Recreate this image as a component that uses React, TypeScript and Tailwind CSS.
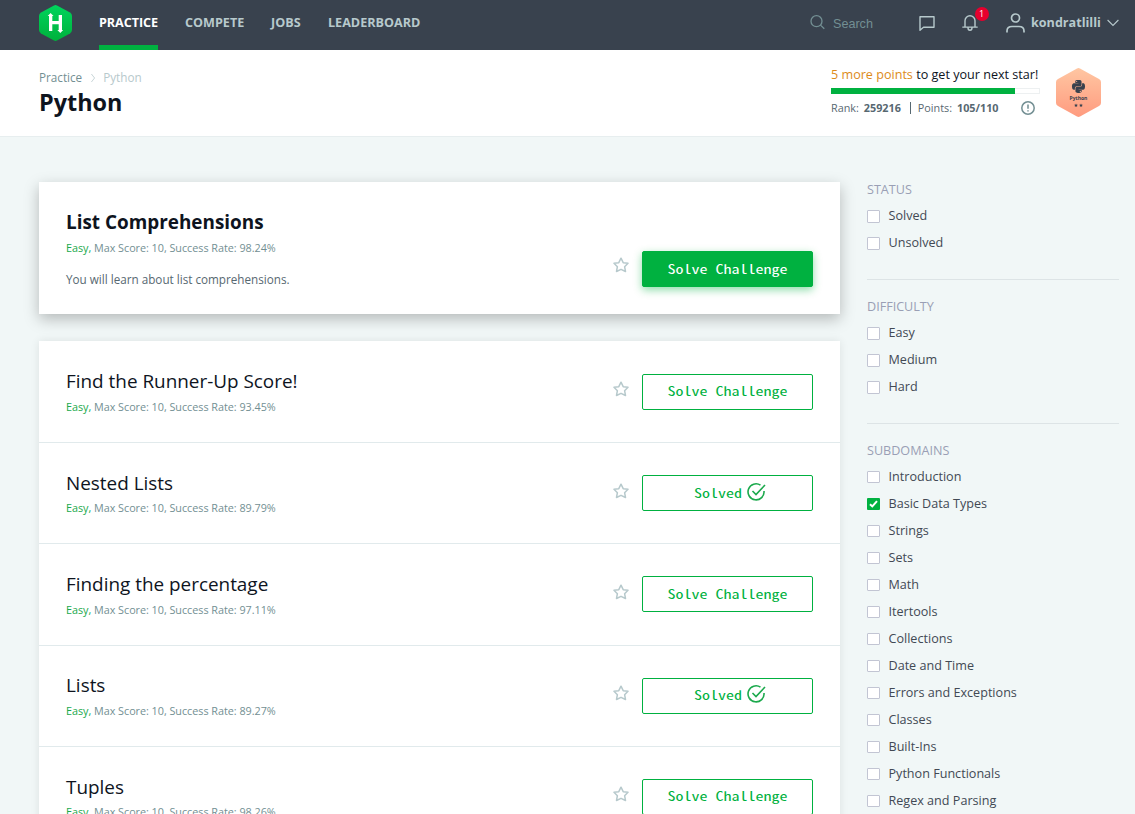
import React from "react";
import { FaPython } from "react-icons/fa";

const rows = [
  { title: "Find the Runner-Up Score!", rate: "93.45%", solved: false },
  { title: "Nested Lists", rate: "89.79%", solved: true },
  { title: "Finding the percentage", rate: "97.11%", solved: false },
  { title: "Lists", rate: "89.27%", solved: true },
  { title: "Tuples", rate: "98.26%", solved: false },
];

const filters = [
  { name: "STATUS", box: "h-[13px]", items: ["Solved", "Unsolved"] },
  { name: "DIFFICULTY", box: "h-[13px]", items: ["Easy", "Medium", "Hard"] },
  {
    name: "SUBDOMAINS",
    box: "h-3",
    items: [
      "Introduction", "Basic Data Types", "Strings", "Sets", "Math", "Itertools", "Collections",
      "Date and Time", "Errors and Exceptions", "Classes", "Built-Ins", "Python Functionals", "Regex and Parsing",
    ],
  },
];

function Logo() {
  return (
    <svg className="block h-9 w-[33px]" viewBox="0 0 33 36">
      <defs>
        <linearGradient id="lg" x1="0" y1="0" x2="0" y2="1">
          <stop offset="0" stopColor="#00d45c" />
          <stop offset="1" stopColor="#00b13c" />
        </linearGradient>
      </defs>
      <path d="M15 .5Q16.500 -.3 18 .5L31 7.600Q33 9 33 11V25Q33 27 31 28.400L18 35.500Q16.500 36.300 15 35.500L2 28.400Q0 27 0 25V11Q0 9 2 7.600Z" fill="url(#lg)" />
      <path d="M10 26V11H8.700L11.600 8L14.500 11H13.300V16H19.700V10H23V25H24.200L21.300 28L18.400 25H19.700V19.200H13.300V26Z" fill="#fff" />
    </svg>
  );
}

function Star() {
  return (
    <svg className="block size-4" viewBox="0 0 16 16" fill="none" stroke="#b7c9cc" strokeWidth="1.500" strokeLinejoin="round">
      <path d="M8 1.200L10.200 5.700L15 6.300L11.600 9.700L12.500 14.500L8 12.300L3.500 14.500L4.400 9.700L1 6.300L5.800 5.700Z" />
    </svg>
  );
}

function Details({ rate }: { rate: string }) {
  return (
    <p className="whitespace-nowrap text-[10.800px] leading-[14px] tracking-[-0.024px] text-[#738f93]">
      <span className="text-[#1ba94c]">Easy,</span> Max Score: 10, Success Rate: {rate}
    </p>
  );
}

const button = "flex h-9 w-[171px] items-center justify-center rounded-[2px] border border-[#00b140] font-['Noto_Sans_Mono_CJK_SC','Liberation_Mono',monospace] text-[16px] font-light leading-5";

export default function App() {
  return (
    <div className="h-[814px] w-[1135px] overflow-hidden bg-[#f1f7f7] font-['Open_Sans',sans-serif] text-[#0e141e]">
      <header className="flex h-[50px] items-start bg-[#39424e] pl-[39px]">
        <div className="pt-[5px]"><Logo /></div>
        <nav className="ml-[27px] flex h-[50px] gap-[27px] text-[12.600px] font-bold leading-[45px] text-[#b7c9cc]">
          <span className="h-[50px] w-[59px] whitespace-nowrap border-b-[5px] border-[#00b140] tracking-[-0.05px] text-white">PRACTICE</span>
          <span className="w-[59px]">COMPETE</span>
          <span className="w-[30px]">JOBS</span>
          <span>LEADERBOARD</span>
        </nav>
        <div className="ml-auto flex h-[46px] items-center text-[#b7c9cc]">
          <svg className="size-4" viewBox="0 0 16 16" fill="none" stroke="#738f93" strokeWidth="1.300"><circle cx="6.500" cy="6.200" r="5.500" /><path d="M10.500 10.100L14.300 13.800" /></svg>
          <span className="ml-[7px] mt-[2px] w-[86px] font-['Liberation_Sans',sans-serif] text-[12.600px] text-[#738f93]">Search</span>
          <svg className="-ml-[0.500px] size-4" viewBox="0 0 16 16" fill="none" stroke="currentColor" strokeWidth="1.400" strokeLinejoin="round"><path d="M1 1.700H15V12.300H4.500L1 15.200Z" /></svg>
          <div className="relative ml-[27px]">
            <svg className="h-4 w-4" viewBox="0 0 16 16" fill="none" stroke="currentColor" strokeWidth="1.400" strokeLinejoin="round" strokeLinecap="round"><path d="M.8 12.100H15.200M3 12V5.700A5 5 0 0 1 13 5.700V12M6 12.800Q6 15.300 8 15.300T10 12.800" /></svg>
            <span className="absolute left-[13px] top-[-8px] size-[14px] rounded-full bg-[#e6002e] text-center text-[9px] leading-[14px] text-white">1</span>
          </div>
          <svg className="ml-[28.500px] h-5 w-[19px]" viewBox="0 0 19 20" fill="none" stroke="currentColor" strokeWidth="1.700"><circle cx="9.500" cy="5" r="4" /><path d="M1 19.500V18Q1 13.500 6 13.500H13Q18 13.500 18 18V19.500" /></svg>
          <span className="ml-[6px] mt-px w-[71px] whitespace-nowrap text-[12.600px] font-bold">kondratlilli</span>
          <svg className="ml-[5px] mr-4 h-2 w-3" viewBox="0 0 12 8" fill="none" stroke="currentColor" strokeWidth="1.100"><path d="M.6 1L6 6.500L11.400 1" /></svg>
        </div>
      </header>

      <section className="flex h-[87px] justify-between border-b border-[#e7eeef] bg-white pl-[39px] pr-[34px]">
        <div>
          <div className="mt-[19px] flex h-[18px] items-center text-[11.700px] text-[#738f93]">
            <span>Practice</span>
            <svg className="ml-[9px] mr-[8px] h-[10px] w-1" viewBox="0 0 5 10" preserveAspectRatio="none" fill="none" stroke="#c2d0d3"><path d="M.5 1L4.500 5L.5 9" /></svg>
            <span className="text-[#b7c9cc]">Python</span>
          </div>
          <h1 className="text-[23.400px] font-bold leading-[31px]">Python</h1>
        </div>
        <div className="flex">
          <div className="w-[209px]">
            <p className="mt-[16px] whitespace-nowrap text-[12.600px] leading-[18px]"><span className="text-[#dd8b18]">5 more points</span> to get your next star!</p>
            <div className="mt-[4px] h-[6px] border border-[#edf0f1]"><div className="-ml-px -mt-px h-[6px] w-[184px] bg-[#00b140]" /></div>
            <div className="mt-[6px] flex h-4 items-center whitespace-nowrap text-[10.800px] text-[#576871]">
              <span>Rank:</span><b className="ml-[5px]">259216</b>
              <span className="ml-[9px] mr-[7px] h-3 w-px bg-[#576871]" />
              <span>Points:</span><b className="ml-[5px]">105/110</b>
              <svg className="ml-auto mr-[5px] size-[14px]" viewBox="0 0 14 14" fill="none" stroke="#738f93" strokeWidth="1.500"><circle cx="7" cy="7" r="6.200" /><path d="M7 3.500V7.800M7 9.200V10.600" /></svg>
            </div>
          </div>
          <div className="relative ml-4 mt-[18px] h-[49px] w-[45px]">
            <svg className="block h-full w-full" viewBox="0 0 45 49">
              <defs><linearGradient id="badge" x1="0" y1="0" x2="0" y2="1"><stop offset="0" stopColor="#ffc6a2" /><stop offset="1" stopColor="#ff9b7f" /></linearGradient></defs>
              <path d="M21 .5Q22.500 -.3 24 .5L43 11Q45 12.200 45 14V35Q45 36.800 43 38L24 48.500Q22.500 49.300 21 48.500L2 38Q0 36.800 0 35V14Q0 12.200 2 11Z" fill="url(#badge)" />
              <path d="M20 35.500L20.600 36.700L21.900 36.800L20.900 37.700L21.200 38.900L20 38.300L18.800 38.900L19.100 37.700L18.100 36.800L19.400 36.700ZM25 35.500L25.600 36.700L26.900 36.800L25.900 37.700L26.200 38.900L25 38.300L23.800 38.900L24.100 37.700L23.100 36.800L24.400 36.700Z" fill="#39424e" />
            </svg>
            <div className="absolute inset-x-0 top-[11px] flex flex-col items-center text-[#39424e]">
              <FaPython size={15} />
              <span className="mt-[1px] text-[5px] font-bold leading-[6px]">Python</span>
            </div>
          </div>
        </div>
      </section>

      <main className="flex pl-[39px] pt-[45px]">
        <div className="w-[801px]">
          <article className="flex h-[132px] justify-between bg-white pl-[27px] pr-[27px] shadow-[0_5px_14px_rgba(0,0,0,0.25)]">
            <div>
              <h2 className="mt-[27px] text-[18.900px] font-bold leading-[27px]">List Comprehensions</h2>
              <div className="mt-[5px]"><Details rate="98.24%" /></div>
              <p className="mt-[15.500px] text-[11.700px] leading-4 text-[#576871]">You will learn about list comprehensions.</p>
            </div>
            <div className="mt-[69px] flex h-9 items-center gap-[13px]">
              <div className="mb-[8px]"><Star /></div>
              <div className={button + " bg-[#00b140] text-white shadow-[0_3px_9px_rgba(0,177,64,0.45)]"}><span className="-mt-[3px] scale-y-[0.8]">Solve Challenge</span></div>
            </div>
          </article>
          <div className="mt-[26.800px] shadow-[0_0_9px_rgba(0,0,0,0.09)]">
            {rows.map((r, i) => (
              <article key={r.title} className={"flex h-[101.300px] justify-between bg-white px-[27px] " + (i ? "shadow-[inset_0_1px_0_#e1eaec]" : "")}>
                <div>
                  <h2 className="mt-[27.600px] text-[18.900px] leading-[27px]">{r.title}</h2>
                  <div className="mt-[4.700px]"><Details rate={r.rate} /></div>
                </div>
                <div className="mt-[33px] flex h-9 items-center gap-[13px]">
                  <div className="mb-[5px]"><Star /></div>
                  <div className={button + " text-[#00b140]"}>
                    <span className="-mt-[3px] scale-y-[0.8]">{r.solved ? "Solved" : "Solve Challenge"}</span>
                    {r.solved && <svg className="-mr-[5px] -mt-[2px] ml-[5px] size-[19px]" viewBox="0 0 19 19" fill="none" stroke="#1ba94c" strokeWidth="1.600"><path d="M13.500 2.200A8 8 0 1 0 17 8M5.500 8L9 11.500L18 2" /></svg>}
                  </div>
                </div>
              </article>
            ))}
          </div>
        </div>
        <aside className="ml-[27px] w-[252px] text-[12.600px]">
          {filters.map((f) => (
            <div key={f.name} className="mb-[19px] border-b border-[#dde4e6] pb-[23px]">
              <h3 className="mb-[4px] h-[16px] whitespace-nowrap leading-[16px] text-[#9a9fb5]">{f.name}</h3>
              {f.items.map((item) => (
                <label key={item} className="flex h-[27px] items-center leading-[27px] text-[#424954]">
                  <span className="mr-[8.500px] mt-px flex size-[13px] items-start justify-center">
                    {item === "Basic Data Types" ? (
                      <svg className="h-3 w-[13px]" viewBox="0 0 13 12"><rect width="13" height="12" rx="1" fill="#00b140" /><path d="M3 6.200L5.300 8.400L10 3.100" fill="none" stroke="#fff" strokeWidth="2" /></svg>
                    ) : (
                      <span className={"w-[13px] rounded-[1px] border border-[#c2c5d3] bg-white " + f.box} />
                    )}
                  </span>
                  {item}
                </label>
              ))}
            </div>
          ))}
        </aside>
      </main>
    </div>
  );
}
